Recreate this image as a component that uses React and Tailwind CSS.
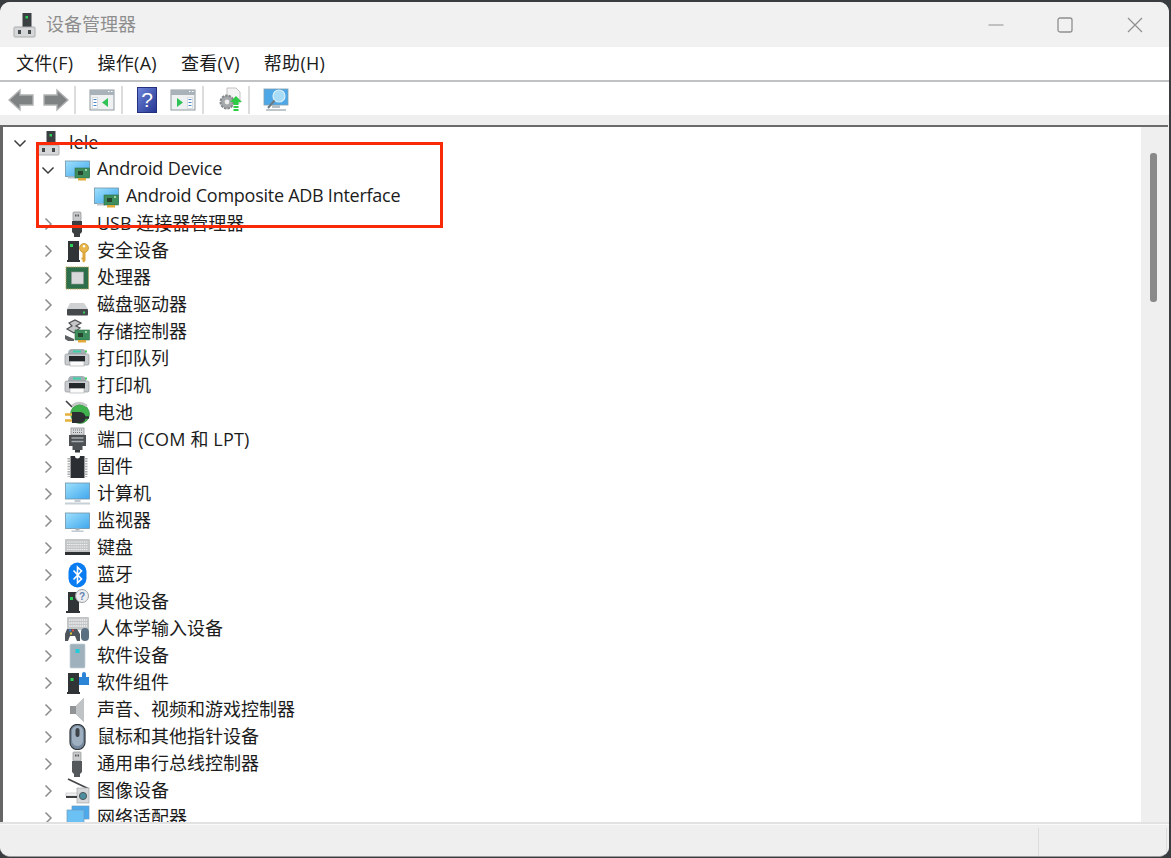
import React from "react";

const FONT = "[font-family:'Open_Sans','Noto_Sans_CJK_SC',sans-serif]";

const Svg = ({ children, className = "" }) => (
  <svg viewBox="0 0 26 26" className={`w-[26px] h-[26px] shrink-0 ${className}`}>{children}</svg>
);

const Root = () => (
  <Svg>
    <rect x="10.5" y="1" width="9" height="15" fill="#3a3f42" />
    <rect x="13.5" y="4" width="2.5" height="2.5" fill="#2ed158" />
    <rect x="2" y="15" width="21" height="10" rx="1" fill="#d5d7d8" stroke="#a9abac" />
    <rect x="6" y="18" width="3" height="4" fill="#44494c" />
    <rect x="16" y="18" width="3" height="4" fill="#44494c" />
  </Svg>
);

const Card = ({ x = 11, y = 12 }) => (
  <g>
    <rect x={x} y={y} width="14.500" height="10" fill="#3e8d5c" stroke="#2f6f49" strokeWidth="0.6" />
    <rect x={x + 3} y={y + 3} width="5" height="4" fill="#27462f" />
    <rect x={x + 10} y={y + 1} width="2" height="2" fill="#9fd3a9" />
    <rect x={x + 3} y={y + 10} width="8" height="2.5" fill="#e0a93a" />
  </g>
);

const Monitor = ({ id = "m", stand = true }) => (
  <g>
    <defs>
      <linearGradient id={id} x1="0" y1="0" x2="1" y2="1">
        <stop offset="0" stopColor="#9fe0fc" />
        <stop offset="1" stopColor="#3fa8ee" />
      </linearGradient>
    </defs>
    <rect x="1.500" y="4" width="24" height="15.500" fill={`url(#${id})`} stroke="#6f93a9" strokeWidth="0.8" />
    {stand && <rect x="11.500" y="19.500" width="4" height="2" fill="#aab7bf" />}
    {stand && <rect x="7.500" y="21.500" width="12" height="1.400" fill="#bcc6cc" />}
  </g>
);

const Nic = ({ id }) => (
  <Svg>
    <Monitor id={id} stand={false} />
    <path d="M4 19.500h8v2H4z" fill="#b8c4cb" />
    <Card x={11} y={11} />
  </Svg>
);

const Usb = ({ dark }) => (
  <Svg>
    <rect x="9" y="1" width="8" height="9" rx="1" fill="#c9cbcc" stroke="#8b8d8e" strokeWidth="0.7" />
    <rect x="11" y="3.500" width="1.500" height="2" fill="#55585a" />
    <rect x="13.500" y="3.500" width="1.500" height="2" fill="#55585a" />
    <path d="M8 10h10v11l-2 2v3h-6v-3l-2-2z" fill={dark ? "#3c3f41" : "#55585a"} />
  </Svg>
);

const Security = () => (
  <Svg>
    <rect x="4" y="3" width="11" height="19" fill="#303436" />
    <rect x="6" y="6" width="3" height="3" fill="#2ed158" />
    <rect x="3" y="22" width="13" height="2" fill="#303436" />
    <circle cx="20" cy="10" r="4.500" fill="#e8b64b" stroke="#b98925" strokeWidth="0.7" />
    <circle cx="20" cy="8.300" r="1.200" fill="#fff" />
    <path d="M18.500 13.500h3v9l-1.500 2-1.500-1v-2h-1v-2h1z" fill="#dca63a" />
  </Svg>
);

const Cpu = () => (
  <Svg>
    <rect x="2" y="2" width="22.500" height="22" fill="#2d6f4b" stroke="#b9a45c" strokeDasharray="1.4 0.8" />
    <rect x="7.500" y="7" width="12" height="12" fill="#d7d9da" stroke="#9a9c9d" strokeWidth="0.6" />
  </Svg>
);

const Disk = () => (
  <Svg>
    <path d="M6 11h14l4 6v1H3v-1z" fill="#cfd1d2" />
    <rect x="3" y="17" width="21" height="6.500" rx="1" fill="#45494b" />
    <rect x="19" y="19.500" width="2" height="2" fill="#33d05f" />
  </Svg>
);

const Storage = () => (
  <Svg>
    <path d="M5 4l6-3 6 3-5 3 4 2-6 5-7-4 5-3z" fill="#c4c6c7" stroke="#4d5052" strokeWidth="1.200" />
    <path d="M1 16l9 4v2H4l-3-2z" fill="#5d6062" />
    <Card x={11} y={11} />
  </Svg>
);

const Printer = () => (
  <Svg>
    <path d="M4 8q0-5 4-5h10q4 0 4 5z" fill="#a4afb5" />
    <rect x="9" y="4.500" width="8" height="2" fill="#3ed0a5" />
    <rect x="21" y="4.500" width="2" height="2" fill="#3ed058" />
    <rect x="1" y="8" width="24" height="11" rx="1.500" fill="#c8ccce" stroke="#8f9497" strokeWidth="0.7" />
    <rect x="5" y="10" width="16" height="5.500" fill="#26292b" />
    <rect x="6" y="15.500" width="14" height="4.500" fill="#fbfbfb" stroke="#a5a8aa" strokeWidth="0.6" />
  </Svg>
);

const Battery = () => (
  <Svg>
    <circle cx="16" cy="14" r="9.500" fill="#3fb24d" stroke="#2b7a37" strokeWidth="0.6" />
    <path d="M8 6q7-6 15 0" stroke="#c4c6c7" strokeWidth="2.600" fill="none" />
    <path d="M2 1l6 6" stroke="#3a3d3f" strokeWidth="1.600" />
    <path d="M8 12h8a5.500 5.500 0 0 1 0 11H8z" fill="#2c2f31" />
    <path d="M20 17.500h5" stroke="#2c2f31" strokeWidth="2.400" />
    <path d="M1 14.500h7M1 20.500h7" stroke="#e3b13e" strokeWidth="2.400" />
  </Svg>
);

const Port = () => (
  <Svg>
    <rect x="7" y="1" width="13" height="7" fill="#d7d9da" stroke="#8e9294" strokeWidth="0.8" />
    <path d="M9 3h9M9 5.500h9" stroke="#70757a" strokeDasharray="1 1" />
    <path d="M5 8h17v11h-3.500v4h-10v-4H5z" fill="#4d5154" />
    <path d="M7.500 11h12M7.500 14.500h12" stroke="#a5abae" strokeWidth="1.600" />
    <rect x="11" y="23" width="5" height="2.500" fill="#34373a" />
  </Svg>
);

const Firmware = () => (
  <Svg>
    <path d="M6.500 2H11a2.500 2.500 0 0 0 5 0h4.500v22h-14z" fill="#2b2e32" />
    <path d="M5 4v19M22 4v19" stroke="#a8aaab" strokeWidth="3" strokeDasharray="1.400 1.200" />
  </Svg>
);

const Computer = () => (
  <Svg>
    <defs>
      <linearGradient id="cmp" x1="0" y1="0" x2="1" y2="1">
        <stop offset="0" stopColor="#9fe0fc" />
        <stop offset="1" stopColor="#3fa8ee" />
      </linearGradient>
    </defs>
    <rect x="1.500" y="2" width="24" height="16" fill="url(#cmp)" stroke="#6f93a9" strokeWidth="0.8" />
    <rect x="10.500" y="18" width="6" height="3" fill="#c2ccd2" />
    <rect x="1" y="21.500" width="25" height="2" fill="#c6d0d6" />
  </Svg>
);

const Display = () => (
  <Svg>
    <g transform="translate(0 1)">
      <Monitor id="dsp" />
    </g>
  </Svg>
);

const Keyboard = () => (
  <Svg>
    <rect x="1" y="4" width="25" height="15" rx="1" fill="#c3c6c7" />
    <path d="M3 7h21M3 9.500h21M3 12h21M3 14.500h21" stroke="#f0f1f2" strokeWidth="1.200" strokeDasharray="1.400 0.700" />
    <rect x="1" y="17" width="25" height="3" fill="#2f3234" />
  </Svg>
);

const Bluetooth = () => (
  <Svg>
    <rect x="4.500" y="0.500" width="18" height="25" rx="9" fill="#0a7cf2" />
    <path d="M9.500 8.500l8 8.500-4 3.800V5.200l4 3.800-8 8.500" fill="none" stroke="#fff" strokeWidth="1.600" />
  </Svg>
);

const Other = () => (
  <Svg>
    <rect x="4" y="3" width="11" height="19" fill="#303436" />
    <rect x="6" y="8" width="3" height="3" fill="#2ed158" />
    <rect x="2" y="22" width="14" height="2" fill="#303436" />
    <circle cx="18" cy="7" r="6.500" fill="#eceef0" stroke="#9ba0a4" />
    <text x="18" y="10.500" textAnchor="middle" fontSize="10" fontWeight="700" fill="#5f7fb0" fontFamily="'Liberation Sans',sans-serif">?</text>
  </Svg>
);

const Hid = () => (
  <Svg>
    <rect x="3" y="1" width="22" height="13" rx="1" fill="#c3c6c7" />
    <path d="M5 4h18M5 7h18M5 10h18" stroke="#f0f1f2" strokeWidth="1.300" strokeDasharray="1.400 0.700" />
    <path d="M3 13h10l3 5v7h-3l-2-5H6l-2 5H1v-7z" fill="#4f565b" />
    <rect x="5" y="13.500" width="2" height="2" fill="#3b82d6" />
    <rect x="8" y="13.500" width="2" height="2" fill="#d8503c" />
    <rect x="6" y="16.500" width="2" height="2" fill="#e8c33a" />
    <rect x="17" y="12" width="8" height="13" rx="4" fill="#5a6f82" />
  </Svg>
);

const SoftDevice = () => (
  <Svg>
    <rect x="6" y="1" width="15" height="24" rx="1" fill="#9fb1bc" stroke="#c5d0d6" strokeWidth="0.7" />
    <rect x="11.500" y="6" width="4" height="4" fill="#21cbd7" />
  </Svg>
);

const SoftComponent = () => (
  <Svg>
    <rect x="4" y="3" width="11" height="19" fill="#303436" />
    <rect x="6.500" y="8" width="3" height="3" fill="#2ed158" />
    <rect x="3" y="22" width="13" height="2" fill="#303436" />
    <path d="M15 7h3V4a2 2 0 0 1 4 0v3h3v8H15z" fill="#2c84d6" />
  </Svg>
);

const Sound = () => (
  <Svg>
    <path d="M6 9h6l8-8v24l-8-8H6z" fill="#8f9396" />
    <path d="M12 9l8-8v24l-8-8z" fill="#c0c3c5" />
  </Svg>
);

const Mouse = () => (
  <Svg>
    <rect x="6" y="0.500" width="15" height="25" rx="7" fill="#75889c" stroke="#2f3538" strokeWidth="1.200" />
    <rect x="8" y="2" width="11" height="20" rx="5.500" fill="#9eb0c0" />
    <rect x="11.500" y="4" width="4" height="9" rx="2" fill="#3d4347" />
  </Svg>
);

const Camera = () => (
  <Svg>
    <path d="M4 1l21 10" stroke="#45494b" strokeWidth="1.800" />
    <rect x="13" y="10" width="12" height="15" fill="#d6d8d9" stroke="#a6a9ab" strokeWidth="0.7" />
    <circle cx="19" cy="18" r="3.600" fill="#4d8fa0" stroke="#51585b" />
    <rect x="2" y="15" width="11" height="3" fill="#f2f2f2" stroke="#aaa" strokeWidth="0.5" />
    <rect x="2" y="18" width="11" height="2" fill="#3d4042" />
  </Svg>
);

const Network = () => (
  <Svg>
    <rect x="8" y="1" width="17" height="13" fill="#4ba9ec" stroke="#6e9cbc" strokeWidth="0.7" />
    <rect x="3" y="5" width="17" height="14" fill="#6cc1f4" stroke="#6e9cbc" strokeWidth="0.7" />
  </Svg>
);

const rows = [
  { l: 0, o: true, t: "lele", I: Root },
  { l: 1, o: true, t: "Android Device", I: () => <Nic id="n1" />, c: "tracking-[-0.14px] -translate-y-px" },
  { l: 2, t: "Android Composite ADB Interface", I: () => <Nic id="n2" />, leaf: true, c: "tracking-[-0.26px] -translate-y-px" },
  { l: 1, t: "USB 连接器管理器", I: () => <Usb dark /> },
  { l: 1, t: "安全设备", I: Security },
  { l: 1, t: "处理器", I: Cpu },
  { l: 1, t: "磁盘驱动器", I: Disk },
  { l: 1, t: "存储控制器", I: Storage },
  { l: 1, t: "打印队列", I: Printer },
  { l: 1, t: "打印机", I: Printer },
  { l: 1, t: "电池", I: Battery },
  { l: 1, t: "端口 (COM 和 LPT)", I: Port, c: "tracking-[0.15px]" },
  { l: 1, t: "固件", I: Firmware },
  { l: 1, t: "计算机", I: Computer },
  { l: 1, t: "监视器", I: Display },
  { l: 1, t: "键盘", I: Keyboard },
  { l: 1, t: "蓝牙", I: Bluetooth },
  { l: 1, t: "其他设备", I: Other },
  { l: 1, t: "人体学输入设备", I: Hid },
  { l: 1, t: "软件设备", I: SoftDevice },
  { l: 1, t: "软件组件", I: SoftComponent },
  { l: 1, t: "声音、视频和游戏控制器", I: Sound },
  { l: 1, t: "鼠标和其他指针设备", I: Mouse },
  { l: 1, t: "通用串行总线控制器", I: () => <Usb /> },
  { l: 1, t: "图像设备", I: Camera },
  { l: 1, t: "网络适配器", I: Network },
];

const Chevron = ({ open }) => (
  <svg viewBox="0 0 14 14" className="w-[14px] h-[14px]">
    <path
      d={open ? "M1.500 4.500L7 10l5.500-5.500" : "M4.500 1.500L10 7l-5.500 5.500"}
      fill="none"
      stroke={open ? "#3c3c3c" : "#8c8c8c"}
      strokeWidth="1.500"
    />
  </svg>
);

const Row = ({ l, o, t, I, leaf, c = "" }) => (
  <div className={`h-[27px] flex items-center ${l === 0 ? "pl-px" : l === 1 ? "pl-[29px]" : "pl-[58px]"}`}>
    <div className="w-[32px] flex justify-center shrink-0">{!leaf && <Chevron open={o} />}</div>
    <I />
    <span className={`ml-[7px] whitespace-nowrap text-[18px] leading-[27px] text-[#1c1c1c] ${c}`}>{t}</span>
  </div>
);

const Sep = () => <div className="w-[2px] h-[28px] bg-[#dcdcdc] shrink-0" />;

const ArrowL = ({ flip }) => (
  <svg viewBox="0 0 26 24" className={`w-[26px] h-[24px] ${flip ? "-scale-x-100" : ""}`}>
    <path d="M1 12L12 2v5h13v10H12v5z" fill="#7f8283" stroke="#b0b2b3" strokeWidth="1.400" />
  </svg>
);

const Win = ({ side }) => (
  <svg viewBox="0 0 26 24" className="w-[26px] h-[24px]">
    <rect x="1" y="2" width="24" height="20" fill="#eef0f1" stroke="#8f9aa0" />
    <rect x="1" y="2" width="24" height="5" fill="#a8b2b8" />
    <path d="M19 3.500h1.500M22 3.500h1.500" stroke="#fff" />
    {side === "l" ? (
      <>
        <path d="M3.500 9.500h5v11h-5z" fill="#fff" stroke="#c5cbd0" strokeWidth="0.6" />
        <path d="M4.500 11.500h3M4.500 14.500h3M4.500 17.500h3" stroke="#4b86c9" />
        <path d="M19 10v9l-6-4.500z" fill="#2fc257" />
      </>
    ) : (
      <>
        <path d="M17.500 9.500h5v11h-5z" fill="#fff" stroke="#c5cbd0" strokeWidth="0.6" />
        <path d="M18.500 11.500h3M18.500 14.500h3M18.500 17.500h3" stroke="#4b86c9" />
        <path d="M7 10v9l6-4.500z" fill="#2fc257" />
      </>
    )}
  </svg>
);

const Help = () => (
  <svg viewBox="0 0 20 26" className="w-[20px] h-[26px]">
    <defs>
      <linearGradient id="hlp" x1="0" y1="0" x2="1" y2="1">
        <stop offset="0" stopColor="#6f86dc" />
        <stop offset="1" stopColor="#24358f" />
      </linearGradient>
    </defs>
    <rect x="0.500" y="0.500" width="19" height="25" fill="url(#hlp)" stroke="#22307f" />
    <text x="10" y="20" textAnchor="middle" fontSize="21" fill="#fff" fontFamily="'Liberation Sans',sans-serif">?</text>
  </svg>
);

const Update = () => (
  <svg viewBox="0 0 26 26" className="w-[26px] h-[26px]">
    <path d="M10 1h9l4 4v11H10z" fill="#f4f4f4" stroke="#c2c2c2" />
    <circle cx="10" cy="15" r="6.500" fill="#a5a8aa" stroke="#86898b" strokeDasharray="2.500 1" strokeWidth="2" />
    <circle cx="10" cy="15" r="2.400" fill="#eee" />
    <path d="M19 9l6 6h-3.500v3h-5v-3H13z" fill="#2ecb45" />
    <path d="M16.500 19h5v2h-5zM16.500 22h5v2h-5z" fill="#2ecb45" />
  </svg>
);

const Scan = () => (
  <svg viewBox="0 0 26 24" className="w-[26px] h-[24px]">
    <rect x="1" y="1" width="24" height="16" fill="#4ea8e8" stroke="#7d9db2" strokeWidth="0.8" />
    <rect x="9" y="17" width="8" height="3" fill="#b7c0c6" />
    <path d="M3 22h20" stroke="#a9b3b9" strokeWidth="1.500" />
    <circle cx="16" cy="8" r="6" fill="#a8dcf7" stroke="#d8eefa" strokeWidth="1.200" />
    <path d="M11.500 12.500L5 20" stroke="#6f7b82" strokeWidth="2" />
  </svg>
);

export default function App() {
  return (
    <div className={`w-[1171px] h-[858px] overflow-hidden bg-[#3a3d40] pt-[2px] ${FONT}`}>
      <div className="relative w-[1169px] h-[855px] bg-[#f0f0f0] rounded-[10px] overflow-hidden flex flex-col border-b border-[#9a9a9a]">
        <div className="h-[45px] shrink-0 bg-[#f1f1f1] flex items-center pl-[12px]">
          <Root />
          <span className="ml-[8px] text-[18px] text-[#8e8e8e]">设备管理器</span>
          <div className="ml-auto flex items-center pr-[26px]">
            <svg viewBox="0 0 16 16" className="w-[16px] h-[16px] mr-[53px]"><path d="M0.500 8h15" stroke="#8f8f8f" strokeWidth="1.200" /></svg>
            <svg viewBox="0 0 16 16" className="w-[16px] h-[16px] mr-[54px]"><rect x="1" y="1" width="14" height="14" rx="2" fill="none" stroke="#8f8f8f" strokeWidth="1.300" /></svg>
            <svg viewBox="0 0 16 16" className="w-[16px] h-[16px]"><path d="M1 1l14 14M15 1L1 15" stroke="#8f8f8f" strokeWidth="1.200" /></svg>
          </div>
        </div>

        <div className="h-[33px] shrink-0 bg-white flex items-center gap-[24px] pl-[16px] text-[18px] tracking-[0.3px] text-[#1c1c1c]">
          <span>文件(F)</span>
          <span>操作(A)</span>
          <span>查看(V)</span>
          <span>帮助(H)</span>
        </div>
        <div className="h-[2px] shrink-0 bg-[#c0c2c3]" />

        <div className="h-[33px] shrink-0 bg-white flex items-center pl-[8px] pt-[3px]">
          <ArrowL />
          <div className="w-[9px]" />
          <ArrowL flip />
          <div className="w-[5px]" />
          <Sep />
          <div className="w-[13px]" />
          <Win side="l" />
          <div className="w-[6px]" />
          <Sep />
          <div className="w-[14px]" />
          <Help />
          <div className="w-[13px]" />
          <Win side="r" />
          <div className="w-[6px]" />
          <Sep />
          <div className="w-[13px]" />
          <Update />
          <div className="w-[5px]" />
          <Sep />
          <div className="w-[13px]" />
          <Scan />
        </div>

        <div className="h-[10px] shrink-0 bg-[#efefef]" />

        <div className="flex-1 min-h-0 flex border-t-[2px] border-[#6b6b6b] border-l-[3px] border-l-[#666] mr-px">
          <div className="flex-1 min-w-0 bg-white overflow-hidden pt-[2px]">
            {rows.map((r) => (
              <Row key={r.t} {...r} />
            ))}
          </div>
          <div className="w-[27px] shrink-0 bg-[#efefef] pt-[26px] pl-[9px]">
            <div className="w-[7px] h-[149px] rounded-[3px] bg-[#898989]" />
          </div>
        </div>

        <div className="h-[2px] shrink-0 bg-[#e2e2e2]" />
        <div className="h-[1px] shrink-0 bg-[#fafafa]" />
        <div className="h-[31px] shrink-0 bg-[#efefef] flex items-stretch justify-end pt-[3px]">
          <div className="w-[129px] border-l border-[#dcdcdc] border-r mr-[2px]" />
        </div>

        <div className="absolute left-[36px] top-[140px] w-[407px] h-[86px] border-[3px] border-[#fa2a08]" />
      </div>
    </div>
  );
}
